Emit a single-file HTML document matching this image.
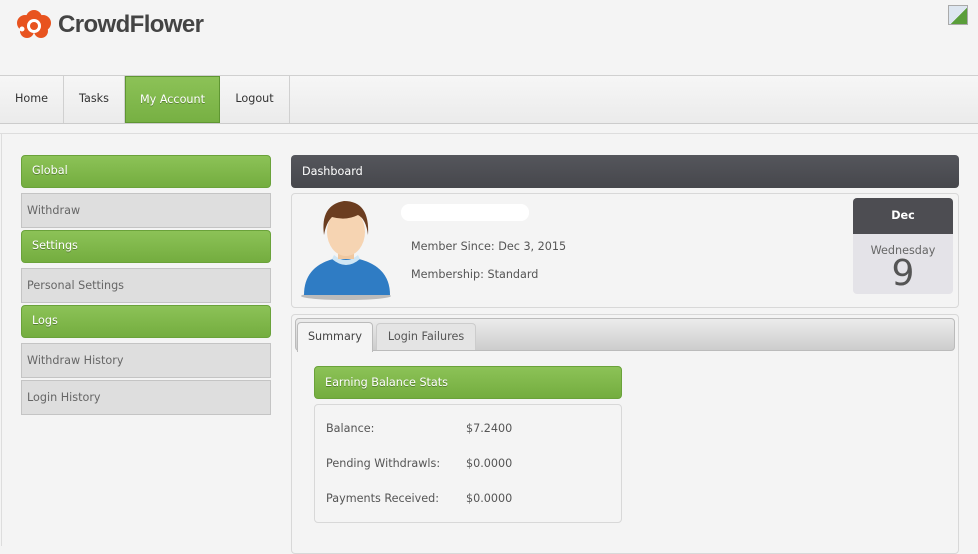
<!DOCTYPE html>
<html><head><style>
*{margin:0;padding:0;box-sizing:border-box}
body{width:978px;height:546px;background:#f4f4f4;font-family:"DejaVu Sans","Liberation Sans",sans-serif;font-size:11.2px;color:#555;position:relative;overflow:hidden}
.a{position:absolute}
.nav{top:75px;left:0;width:978px;height:49px;border-top:1px solid #d0d0d0;border-bottom:1px solid #ccc;background:linear-gradient(#f6f6f6,#ebebeb)}
.ni{top:0;height:47px;line-height:46px;text-align:center;color:#333;border-right:1px solid #d0d0d0}
.g{background:linear-gradient(#8cc257,#74ad3f);border:1px solid #6aa23a;border-radius:4px;color:#fff;padding-left:10px;line-height:30px;text-shadow:0 1px 0 rgba(0,0,0,.3)}
.s{background:#dedede;border:1px solid #c4c4c4;color:#666;padding-left:5px;line-height:33px}
.box{background:#f4f4f4;border:1px solid #d8d8d8;border-radius:4px}
</style></head><body>
<svg class="a" style="left:15px;top:9px" width="38" height="30" viewBox="0 0 38 30"><g fill="#e8531f"><circle cx="19" cy="9" r="8"/><circle cx="10" cy="14" r="8"/><circle cx="28" cy="14" r="8"/><circle cx="12" cy="22" r="7"/><circle cx="26" cy="22" r="7"/></g><circle cx="19" cy="17" r="7" fill="#fff"/><circle cx="19" cy="17" r="4" fill="#e8531f"/><circle cx="7" cy="20" r="2.5" fill="#fff"/></svg>
<div class="a" style="left:58px;top:11px;font-family:'Liberation Sans',sans-serif;font-weight:bold;font-size:24px;color:#444;letter-spacing:-0.6px">CrowdFlower</div>
<div class="a" style="left:948px;top:5px;width:20px;height:20px;border:1px solid #aaa;background:linear-gradient(135deg,#dde6f0 55%,#5a9e3a 55%)"></div>
<div class="a nav">
<div class="a ni" style="left:0;width:64px">Home</div>
<div class="a ni" style="left:64px;width:61px">Tasks</div>
<div class="a ni" style="left:125px;width:95px;background:linear-gradient(#8cc257,#77b043);color:#fff;border:1px solid #5f9632;text-shadow:0 1px 0 rgba(0,0,0,.3)">My Account</div>
<div class="a ni" style="left:220px;width:70px">Logout</div>
</div>
<div class="a" style="left:0;top:133px;width:978px;height:1px;background:#ddd"></div>
<div class="a" style="left:1px;top:133px;width:1px;height:413px;background:#ddd"></div>
<div class="a g" style="left:21px;top:155px;width:250px;height:33px">Global</div>
<div class="a s" style="left:21px;top:193px;width:250px;height:35px">Withdraw</div>
<div class="a g" style="left:21px;top:230px;width:250px;height:33px">Settings</div>
<div class="a s" style="left:21px;top:268px;width:250px;height:35px">Personal Settings</div>
<div class="a g" style="left:21px;top:305px;width:250px;height:33px">Logs</div>
<div class="a s" style="left:21px;top:343px;width:250px;height:35px">Withdraw History</div>
<div class="a s" style="left:21px;top:380px;width:250px;height:35px">Login History</div>
<div class="a" style="left:291px;top:155px;width:668px;height:33px;background:linear-gradient(#55565c,#46474c);border-radius:4px;color:#fff;line-height:34px;padding-left:11px">Dashboard</div>
<div class="a box" style="left:291px;top:193px;width:668px;height:115px"></div>
<svg class="a" style="left:298px;top:197px" width="100" height="105" viewBox="0 0 100 105">
<ellipse cx="48" cy="99" rx="45" ry="4" fill="#bbb"/>
<path d="M6 98 Q6 70 35 62 L61 62 Q92 70 92 98 Z" fill="#2f7cc4"/>
<path d="M34 62 Q48 74 62 62 L60 58 Q48 68 36 58Z" fill="#cfe6f5"/>
<rect x="40" y="48" width="16" height="14" fill="#f0c8a0"/>
<ellipse cx="48" cy="35" rx="19" ry="24" fill="#f6d4b2"/>
<path d="M26 38 Q22 8 46 4 Q72 4 70 38 Q68 22 60 18 Q48 24 34 20 Q28 26 26 38Z" fill="#6b3d20"/>
</svg>
<div class="a" style="left:401px;top:204px;width:128px;height:17px;background:#fff;border-radius:8px"></div>
<div class="a" style="left:411px;top:240px">Member Since: Dec 3, 2015</div>
<div class="a" style="left:411px;top:268px">Membership: Standard</div>
<div class="a" style="left:853px;top:198px;width:100px;height:96px;background:#e4e3e8;border-radius:4px;overflow:hidden;text-align:center">
<div style="background:#4d4d52;color:#fff;font-weight:bold;height:36px;line-height:36px">Dec</div>
<div style="margin-top:10px;color:#666">Wednesday</div>
<div style="font-size:36px;line-height:34px;color:#555">9</div>
</div>
<div class="a box" style="left:291px;top:314px;width:668px;height:240px"></div>
<div class="a" style="left:295px;top:318px;width:660px;height:33px;background:linear-gradient(#ececec,#cdcdcd);border:1px solid #bbb;border-radius:4px"></div>
<div class="a" style="left:297px;top:322px;width:76px;height:30px;background:#f4f4f4;border:1px solid #bbb;border-bottom:none;border-radius:4px 4px 0 0;text-align:center;line-height:28px;color:#444">Summary</div>
<div class="a" style="left:376px;top:323px;width:100px;height:27px;background:#e4e4e4;border:1px solid #ccc;border-bottom:none;border-radius:4px 4px 0 0;text-align:center;line-height:26px;color:#555">Login Failures</div>
<div class="a g" style="left:314px;top:366px;width:308px;height:33px;line-height:31px">Earning Balance Stats</div>
<div class="a box" style="left:314px;top:404px;width:308px;height:119px"></div>
<div class="a" style="left:326px;top:422px">Balance:</div><div class="a" style="left:466px;top:422px">$7.2400</div>
<div class="a" style="left:326px;top:457px">Pending Withdrawls:</div><div class="a" style="left:466px;top:457px">$0.0000</div>
<div class="a" style="left:326px;top:492px">Payments Received:</div><div class="a" style="left:466px;top:492px">$0.0000</div>
</body></html>
